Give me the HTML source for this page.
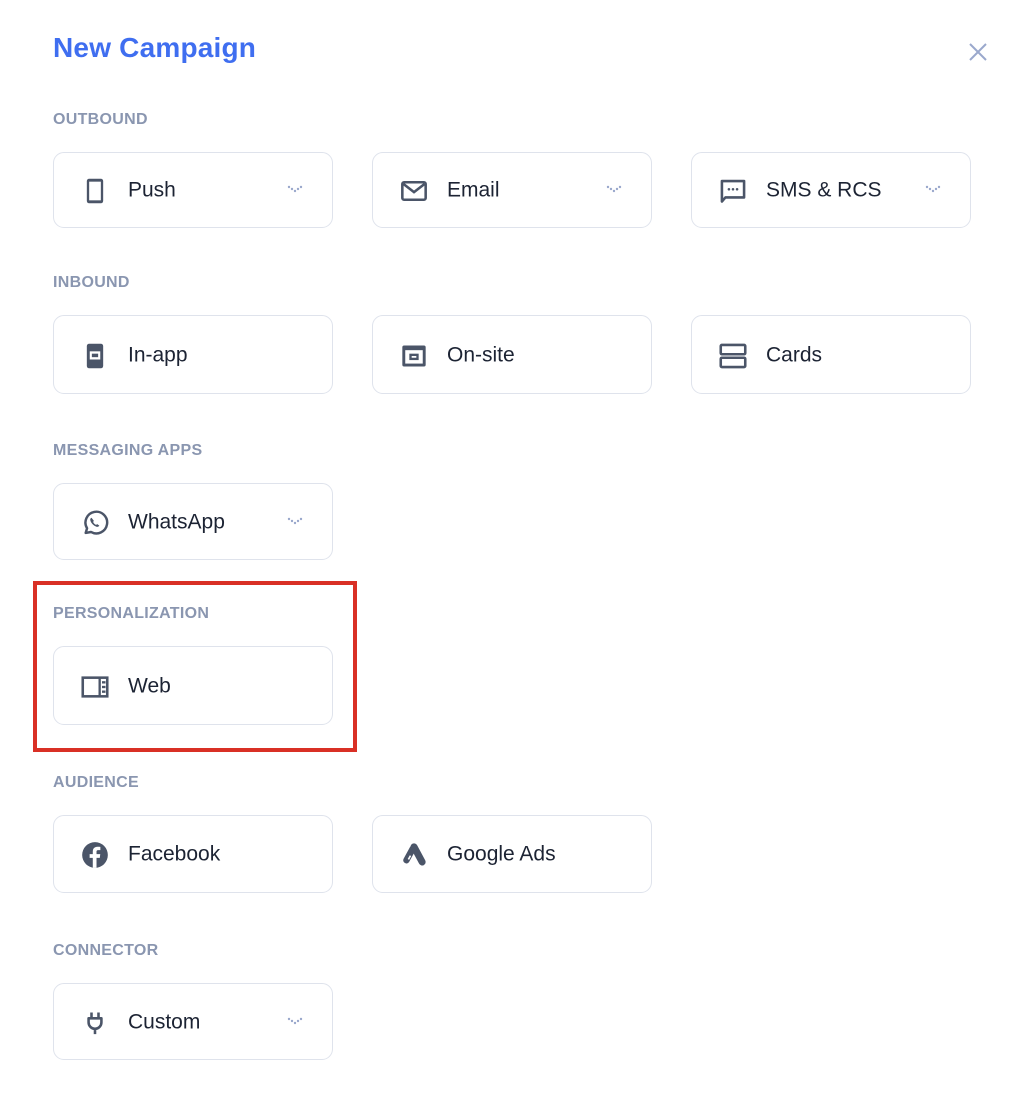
<!DOCTYPE html>
<html><head><meta charset="utf-8"><style>
*{margin:0;padding:0;box-sizing:border-box}
body{width:1026px;height:1098px;background:#fff;position:relative;overflow:hidden;font-family:"Liberation Sans",sans-serif}
.t{position:absolute;left:53px;top:32px;font-size:28px;font-weight:bold;color:#3f6ef0;letter-spacing:0.2px}
.l{position:absolute;left:53px;font-size:16px;font-weight:bold;color:#8a96b0;letter-spacing:0.3px}
.c{position:absolute;width:280px;border:1px solid #dfe3ec;border-radius:11px;background:#fff}
.c svg.i{position:absolute;left:27px;top:50%;margin-top:-13px;width:28px;height:28px}
.c span{position:absolute;left:74px;top:50%;transform:translateY(-48%);font-size:21px;color:#1c2333}
.c svg.d{position:absolute;right:29px;top:50%;margin-top:-5px;width:16px;height:10px}
.red{position:absolute;left:33px;top:581px;width:324px;height:171px;border:4px solid #d93025}
</style></head><body>
<div class="t">New Campaign</div>
<svg style="position:absolute;left:968px;top:42px" width="20" height="20" viewBox="0 0 20 20"><path d="M2 2L18 18M18 2L2 18" stroke="#9aa8cc" stroke-width="2"/></svg>

<div class="l" style="top:111px">OUTBOUND</div>
<div class="c" style="left:53px;top:152px;height:76px"><svg class="i" viewBox="0 0 24 24"><rect x="5" y="1.5" width="14" height="21" rx="2" fill="#4b5568"/><rect x="7" y="4" width="10" height="16" fill="#fff"/></svg><span>Push</span><svg class="d" viewBox="0 0 16 10"><g fill="#9aa8cc"><circle cx="2" cy="2" r="1.2"/><circle cx="5" cy="4" r="1.2"/><circle cx="8" cy="6" r="1.2"/><circle cx="11" cy="4" r="1.2"/><circle cx="14" cy="2" r="1.2"/></g></svg></div>
<div class="c" style="left:372px;top:152px;height:76px"><svg class="i" viewBox="0 0 24 24"><rect x="2" y="4.5" width="20" height="15" rx="1.5" fill="none" stroke="#4b5568" stroke-width="2.2"/><path d="M3 6l9 7 9-7" fill="none" stroke="#4b5568" stroke-width="2.2"/></svg><span>Email</span><svg class="d" viewBox="0 0 16 10"><g fill="#9aa8cc"><circle cx="2" cy="2" r="1.2"/><circle cx="5" cy="4" r="1.2"/><circle cx="8" cy="6" r="1.2"/><circle cx="11" cy="4" r="1.2"/><circle cx="14" cy="2" r="1.2"/></g></svg></div>
<div class="c" style="left:691px;top:152px;height:76px"><svg class="i" viewBox="0 0 24 24"><path d="M2.5 3.5h19v14h-16l-3 3.5z" fill="none" stroke="#4b5568" stroke-width="2.2" stroke-linejoin="round"/><g fill="#4b5568"><circle cx="8.5" cy="10.5" r="1.1"/><circle cx="12" cy="10.5" r="1.1"/><circle cx="15.5" cy="10.5" r="1.1"/></g></svg><span>SMS &amp; RCS</span><svg class="d" viewBox="0 0 16 10"><g fill="#9aa8cc"><circle cx="2" cy="2" r="1.2"/><circle cx="5" cy="4" r="1.2"/><circle cx="8" cy="6" r="1.2"/><circle cx="11" cy="4" r="1.2"/><circle cx="14" cy="2" r="1.2"/></g></svg></div>

<div class="l" style="top:274px">INBOUND</div>
<div class="c" style="left:53px;top:315px;height:79px"><svg class="i" viewBox="0 0 24 24"><rect x="5" y="1.5" width="14" height="21" rx="2" fill="#4b5568"/><rect x="7.5" y="8" width="9" height="7" fill="#fff"/><rect x="9.3" y="10" width="5.4" height="3" fill="#4b5568"/></svg><span>In-app</span></div>
<div class="c" style="left:372px;top:315px;height:79px"><svg class="i" viewBox="0 0 24 24"><rect x="2" y="3" width="20" height="18" rx="1.5" fill="#4b5568"/><rect x="4.5" y="7" width="15" height="11.5" fill="#fff"/><rect x="8" y="10" width="8" height="5.5" fill="#4b5568"/><rect x="10" y="12" width="4" height="1.5" fill="#fff"/></svg><span>On-site</span></div>
<div class="c" style="left:691px;top:315px;height:79px"><svg class="i" viewBox="0 0 24 24"><rect x="1.5" y="2.5" width="21" height="8" rx="1" fill="none" stroke="#4b5568" stroke-width="2.2"/><rect x="1.5" y="13.5" width="21" height="8" rx="1" fill="none" stroke="#4b5568" stroke-width="2.2"/></svg><span>Cards</span></div>

<div class="l" style="top:442px">MESSAGING APPS</div>
<div class="c" style="left:53px;top:483px;height:77px"><svg class="i" viewBox="0 0 24 24"><path d="M4 20.5l1.2-4A9.3 9.3 0 1 1 8.5 19.7z" fill="none" stroke="#4b5568" stroke-width="2.1" stroke-linejoin="round"/><path d="M9 7.5c-.8.4-1.3 1.2-1 2.3.7 2.5 2.8 4.6 5.3 5.4 1 .3 2-.2 2.4-1l-1.8-1.2-1 .6c-1.1-.5-2-1.4-2.5-2.5l.6-1z" fill="#4b5568"/></svg><span>WhatsApp</span><svg class="d" viewBox="0 0 16 10"><g fill="#9aa8cc"><circle cx="2" cy="2" r="1.2"/><circle cx="5" cy="4" r="1.2"/><circle cx="8" cy="6" r="1.2"/><circle cx="11" cy="4" r="1.2"/><circle cx="14" cy="2" r="1.2"/></g></svg></div>

<div class="l" style="top:605px">PERSONALIZATION</div>
<div class="c" style="left:53px;top:646px;height:79px"><svg class="i" viewBox="0 0 24 24"><rect x="1.5" y="4" width="21" height="16" fill="none" stroke="#4b5568" stroke-width="2.2"/><rect x="15" y="4" width="2" height="16" fill="#4b5568"/><rect x="18" y="7" width="3" height="2" fill="#4b5568"/><rect x="18" y="11" width="3" height="2" fill="#4b5568"/><rect x="18" y="15" width="3" height="2" fill="#4b5568"/></svg><span>Web</span></div>
<div class="red"></div>

<div class="l" style="top:774px">AUDIENCE</div>
<div class="c" style="left:53px;top:815px;height:78px"><svg class="i" viewBox="0 0 24 24"><circle cx="12" cy="12" r="11" fill="#4b5568"/><path d="M13.3 23V14.5h2.8l.4-3.2h-3.2V9.3c0-.9.3-1.5 1.6-1.5h1.7V5c-.3 0-1.3-.1-2.5-.1-2.4 0-4 1.5-4 4.1v2.3H7.4v3.2h2.7V23z" fill="#fff"/></svg><span>Facebook</span></div>
<div class="c" style="left:372px;top:815px;height:78px"><svg class="i" viewBox="0 0 24 24"><path d="M12 5l7 13" stroke="#4b5568" stroke-width="6" stroke-linecap="round"/><path d="M11 6.5L5.5 16.5" stroke="#4b5568" stroke-width="5.5" stroke-linecap="round"/><path d="M9 12.5l-1.8 3.3" stroke="#fff" stroke-width="1.4"/></svg><span>Google Ads</span></div>

<div class="l" style="top:942px">CONNECTOR</div>
<div class="c" style="left:53px;top:983px;height:77px"><svg class="i" viewBox="0 0 24 24"><path d="M9 3v5M15 3v5M6.5 8h11v3.5a5.5 5.5 0 0 1-11 0z M12 17v4.5" fill="none" stroke="#4b5568" stroke-width="2.2" stroke-linejoin="round"/></svg><span>Custom</span><svg class="d" viewBox="0 0 16 10"><g fill="#9aa8cc"><circle cx="2" cy="2" r="1.2"/><circle cx="5" cy="4" r="1.2"/><circle cx="8" cy="6" r="1.2"/><circle cx="11" cy="4" r="1.2"/><circle cx="14" cy="2" r="1.2"/></g></svg></div>
</body></html>
